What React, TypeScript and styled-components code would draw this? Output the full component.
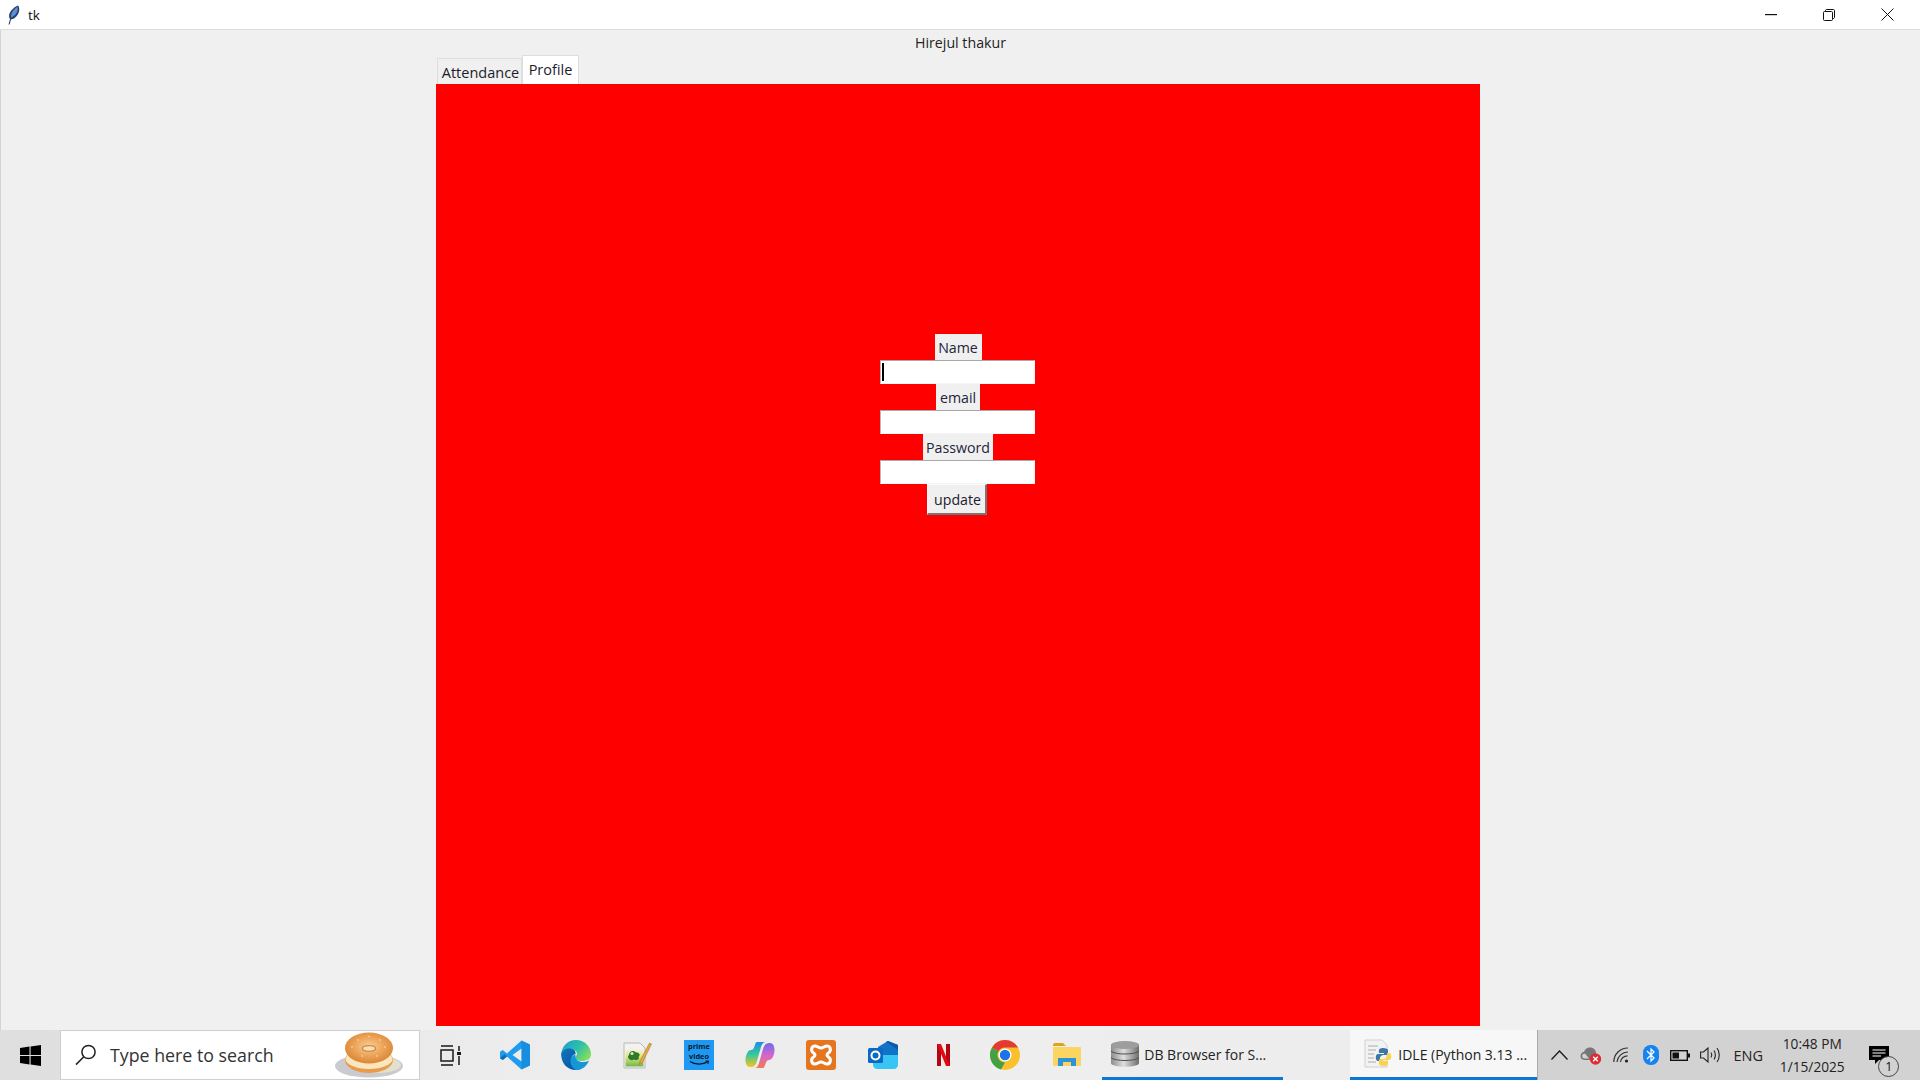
import React from "react";
import styled, { createGlobalStyle } from "styled-components";

const Global = createGlobalStyle`
  html, body { margin: 0; padding: 0; height: 100%; overflow: hidden; }
  #root { height: 100%; }
  * { box-sizing: border-box; }
`;

const Desktop = styled.div`
  width: 1920px;
  height: 1080px;
  display: flex;
  flex-direction: column;
  font-family: "Open Sans", "Noto Sans", "Liberation Sans", sans-serif;
  color: #1a1a1a;
  background: #f0f0f0;
`;

/* ---------- window chrome ---------- */
const TitleBar = styled.header`
  height: 30px;
  flex: none;
  display: flex;
  align-items: center;
  background: #fff;
  padding-left: 7px;
  border-bottom: 1px solid #dcdcdc;
`;
const WindowTitle = styled.span`
  font-size: 13.5px;
  margin-left: 8px;
  color: #111;
`;
const WindowControls = styled.div`
  margin-left: auto;
  padding-right: 3px;
  display: flex;
`;
const ControlButton = styled.div`
  width: 58.6px;
  height: 29px;
  display: flex;
  align-items: center;
  justify-content: center;
`;

/* ---------- app body ---------- */
const Body = styled.main`
  flex: 1;
  min-height: 0;
  display: flex;
  flex-direction: column;
  border-left: 1px solid #d4d4d4;
  padding-bottom: 4px;
`;
const Heading = styled.div`
  height: 25px;
  flex: none;
  display: flex;
  align-items: center;
  justify-content: center;
  font-size: 14.2px;
  color: #222;
`;
const Notebook = styled.section`
  flex: 1;
  min-height: 0;
  width: 1044px;
  margin-left: 435px;
  display: flex;
  flex-direction: column;
`;
const TabRow = styled.div`
  height: 29px;
  flex: none;
  display: flex;
  align-items: flex-end;
  padding-left: 1px;
`;
const Tab = styled.div<{ $active?: boolean }>`
  height: ${(p) => (p.$active ? "29px" : "26px")};
  padding: ${(p) => (p.$active ? "0 6px 2px" : "1px 0 0 2px")};
  width: ${(p) => (p.$active ? "57px" : "85px")};
  display: flex;
  align-items: center;
  justify-content: center;
  font-size: 14.5px;
  color: #1c1c2c;
  background: ${(p) => (p.$active ? "#fff" : "#f0f0f0")};
  border: 1px solid #dedede;
  border-bottom: none;
`;
const Panel = styled.div`
  flex: 1;
  min-height: 0;
  background: #ff0000;
  padding: 250px 2px 0 0;
  display: flex;
  flex-direction: column;
  align-items: center;
`;
const FieldLabel = styled.div<{ $width: number }>`
  width: ${(p) => p.$width}px;
  height: 26px;
  margin-left: 2px;
  display: flex;
  align-items: center;
  justify-content: center;
  background: #f0f0f0;
  font-size: 14.2px;
  color: #24243a;
`;
const Entry = styled.div`
  width: 155px;
  height: 24px;
  background: #fff;
  border-top: 1px solid #a8a8a8;
  border-left: 1px solid #b8b8b8;
  border-right: 1px solid #f4f4f4;
  border-bottom: 1px solid #f4f4f4;
  display: flex;
  align-items: center;
`;
const Caret = styled.div`
  width: 2px;
  height: 18px;
  margin-left: 1px;
  background: #000;
`;
const UpdateButton = styled.div`
  width: 60px;
  height: 31px;
  padding-left: 2px;
  display: flex;
  align-items: center;
  justify-content: center;
  background: #f0f0f0;
  font-size: 14.2px;
  color: #1c1c2c;
  border-top: 1px solid #fafafa;
  border-left: 1px solid #fafafa;
  border-right: 2px solid #777;
  border-bottom: 2px solid #777;
`;

/* ---------- taskbar ---------- */
const Taskbar = styled.footer`
  height: 50px;
  flex: none;
  display: flex;
  align-items: stretch;
  background: linear-gradient(90deg, #dedede 0%, #ececec 25%, #eeeeee 55%, #ebebeb 100%);
`;
const StartButton = styled.div`
  width: 60px;
  flex: none;
  display: flex;
  align-items: center;
  justify-content: center;
`;
const SearchBox = styled.div`
  width: 360px;
  flex: none;
  display: flex;
  align-items: center;
  background: #fff;
  border: 1px solid #cfcfcf;
  padding-left: 14px;
`;
const SearchText = styled.span`
  font-size: 17.8px;
  margin-left: 13px;
  color: #333;
`;
const BagelWrap = styled.div`
  margin-left: auto;
  margin-right: 15px;
  display: flex;
`;
const TaskViewSlot = styled.div`
  width: 64px;
  flex: none;
  display: flex;
  align-items: center;
  justify-content: center;
  padding-right: 4px;
`;
const IconSlot = styled.div`
  width: 61.33px;
  flex: none;
  display: flex;
  align-items: center;
  justify-content: center;
`;
const RunningApp = styled.div<{ $width: number; $active?: boolean; $gap: number; $pad: number }>`
  width: ${(p) => p.$width}px;
  margin-left: ${(p) => p.$gap}px;
  flex: none;
  display: flex;
  align-items: center;
  padding-left: ${(p) => p.$pad}px;
  font-size: 14px;
  color: #222;
  white-space: nowrap;
  background: ${(p) => (p.$active ? "#f7f7f7" : "transparent")};
  border-bottom: 3px solid #0a78d4;
`;
const RunningLabel = styled.span`
  margin-left: 4px;
  padding-top: 2px;
`;
const Tray = styled.div`
  flex: 1;
  margin-left: -3px;
  padding-left: 5px;
  display: flex;
  align-items: center;
  background: #d2d2d2;
  border-left: 1px solid #a9a9a9;
`;
const TraySlot = styled.div<{ $width: number }>`
  width: ${(p) => p.$width}px;
  flex: none;
  height: 100%;
  display: flex;
  align-items: center;
  justify-content: center;
`;
const TrayText = styled.span`
  font-size: 14.5px;
  color: #222;
`;
const Clock = styled.div`
  width: 82px;
  flex: none;
  text-align: center;
  font-size: 13.7px;
  line-height: 23px;
  color: #222;
  white-space: nowrap;
`;
const NotificationIcon = styled.div`
  position: relative;
  display: flex;
`;
const NotificationBadge = styled.div`
  position: absolute;
  right: -10px;
  bottom: -12px;
  width: 21px;
  height: 21px;
  border-radius: 50%;
  border: 1px solid #444;
  background: #d2d2d2;
  font-size: 12.5px;
  line-height: 19px;
  text-align: center;
  color: #111;
`;

/* ---------- icons ---------- */
const Feather = () => (
  <svg width="13" height="20" viewBox="0 0 13 20">
    <path d="M1.5 19.5 L3 14 C0.5 11 3 4 11 0.5 C13.5 3 12.5 10 7 13.5 L4 14.5 L2.6 19.5Z" fill="#27426f" />
    <path d="M4 12.5 C3.5 8.5 6.5 4 10.5 2 C11.5 5 9.5 10.5 4 12.5Z" fill="#5d8fd6" />
  </svg>
);
const WindowsLogo = () => (
  <svg width="21" height="21" viewBox="0 0 21 21" fill="#000">
    <path d="M0 3 L9.5 1.6 V10 H0Z M10.6 1.4 L21 0 V10 H10.6Z M0 11 H9.5 V19.4 L0 18Z M10.6 11 H21 V21 L10.6 19.6Z" />
  </svg>
);
const SearchGlass = () => (
  <svg width="22" height="22" viewBox="0 0 22 22" fill="none" stroke="#222" strokeWidth="1.5">
    <circle cx="13.5" cy="8" r="6.6" />
    <path d="M8.8 12.8 L1 20.6" />
  </svg>
);
const Bagel = () => (
  <svg width="70" height="46" viewBox="0 0 70 46">
    <defs>
      <radialGradient id="bagelTop" cx="50%" cy="45%" r="55%">
        <stop offset="0%" stopColor="#f6cf97" />
        <stop offset="55%" stopColor="#eda458" />
        <stop offset="100%" stopColor="#d98638" />
      </radialGradient>
    </defs>
    <ellipse cx="35" cy="34" rx="34" ry="11.5" fill="#c9cbd0" />
    <ellipse cx="42" cy="33" rx="25" ry="8" fill="#e4e0d0" />
    <ellipse cx="35" cy="28" rx="24" ry="13" fill="#e99b4d" />
    <ellipse cx="35" cy="27" rx="23.5" ry="10" fill="#fbe7bb" />
    <ellipse cx="35" cy="16" rx="24" ry="15.5" fill="url(#bagelTop)" />
    <ellipse cx="35" cy="16.5" rx="6.5" ry="2.8" fill="#f7e0b4" stroke="#cf8a4a" strokeWidth="1.3" />
    <g fill="#fff1d6">
      <circle cx="24" cy="8" r=".7" /><circle cx="35" cy="4.5" r=".7" /><circle cx="46" cy="8" r=".7" />
      <circle cx="18" cy="15" r=".7" /><circle cx="51" cy="15" r=".7" /><circle cx="28" cy="24" r=".7" />
      <circle cx="43" cy="24" r=".7" />
    </g>
  </svg>
);
const TaskView = () => (
  <svg width="21" height="21" viewBox="0 0 21 21" fill="none" stroke="#1a1a1a" strokeWidth="1.5">
    <path d="M1 1 H13 M1 20 H13" />
    <rect x="1" y="5" width="12" height="11" />
    <path d="M19 1 V6 M19 11 V20" />
    <rect x="17" y="7" width="4" height="3" fill="#1a1a1a" stroke="none" />
  </svg>
);
const VSCode = () => (
  <svg width="30" height="30" viewBox="0 0 30 30">
    <path d="M21.5 0.5 L30 4.6 V25.4 L21.5 29.5 L7 16.5 L2.8 20 L0 18.2 V11.8 L2.8 10 L7 13.5Z M21.5 8.5 L12.5 15 L21.5 21.5Z" fill="#1f9cf0" fillRule="evenodd" />
    <path d="M21.5 0.5 L30 4.6 V25.4 L21.5 29.5Z" fill="#0f7fcb" opacity=".45" />
    <path d="M0 18.2 L2.8 20 L7 16.5 L4.5 14.3Z" fill="#0f6fb5" />
  </svg>
);
const Edge = () => (
  <svg width="30" height="30" viewBox="0 0 30 30">
    <defs>
      <linearGradient id="edgeA" x1="0" y1="0" x2="1" y2="0.6">
        <stop offset="0%" stopColor="#1a9ad6" />
        <stop offset="60%" stopColor="#2fc1a8" />
        <stop offset="100%" stopColor="#7fdc60" />
      </linearGradient>
      <linearGradient id="edgeB" x1="0" y1="0" x2="1" y2="1">
        <stop offset="0%" stopColor="#0e76bd" />
        <stop offset="100%" stopColor="#0a4f9e" />
      </linearGradient>
    </defs>
    <path d="M15 0 C24 0 30 7 30 14 C30 19 26 21 21 21 C17 21 14.5 19.5 14.5 17.5 C14.5 16 15.5 15.5 16 14.5 C16.5 11 13 9 9.5 9.5 C5 10 2 13 0.2 16 C0 7 6 0 15 0Z" fill="url(#edgeA)" />
    <path d="M0.2 14 C1.5 9.5 6 8 9.5 8.5 C13 9 15 11 14.5 14 C11 15 9.5 18 10.5 22 C11.5 26 15 29 19 29.5 C17.5 30 16 30 15 30 C6 30 0 23 0.2 14Z" fill="url(#edgeB)" />
    <path d="M14.5 17 C15 20.5 19 22.5 23 22 C25 21.8 27 21 28 20.4 C26 26 21 30 15 30 C11.5 28.5 9 24 9.5 20 C10 17 12 15 14.5 14.5Z" fill="#1695d8" />
  </svg>
);
const NotepadPP = () => (
  <svg width="29" height="28" viewBox="0 0 29 28">
    <defs>
      <linearGradient id="nppBg" x1="0" y1="0" x2="0" y2="1">
        <stop offset="0%" stopColor="#f3f3e6" />
        <stop offset="45%" stopColor="#dfe27a" />
        <stop offset="100%" stopColor="#6fb84a" />
      </linearGradient>
    </defs>
    <path d="M1 2 H17 L22 7 V27 H1Z" fill="#f2f2ee" stroke="#b9b9b9" />
    <rect x="2.5" y="8" width="18" height="17.5" fill="url(#nppBg)" />
    <path d="M6 14 C6 9.5 11 9 13 11.5 C16 11 18 14 15.5 16 C17 18 14 20 11 18.5 C9 20 6 19 5.5 17 C4.5 16 5 15 6 14Z" fill="#2f7a2a" />
    <circle cx="9" cy="12.5" r="1.6" fill="#d9e8c8" />
    <path d="M17 20 L26.5 2 L28.5 3 L19.5 21.5 L16.5 23.5Z" fill="#eaa93a" stroke="#8a6a2a" strokeWidth=".5" />
  </svg>
);
const Prime = () => (
  <svg width="30" height="30" viewBox="0 0 30 30">
    <rect width="30" height="30" fill="#1f98f4" />
    <text x="15" y="9" textAnchor="middle" fontSize="7.4" fontWeight="700" fontFamily="Open Sans, sans-serif" fill="#0c1a26">prime</text>
    <text x="15" y="19" textAnchor="middle" fontSize="7.4" fontWeight="700" fontFamily="Open Sans, sans-serif" fill="#0c1a26">video</text>
    <path d="M6 21.5 C11 25 19 25 24 21.5" fill="none" stroke="#0c1a26" strokeWidth="1.4" />
    <path d="M21.5 21 L24.6 21 L23.8 24" fill="none" stroke="#0c1a26" strokeWidth="1" />
  </svg>
);
const copilotBlade = "M12 1 H21 C18 1 17 3 16 6 L12 20 C11 24 9 26 6 26 H5 C2 26 0.5 23 0.5 19 C0.5 14 3 9 6 9 C8 9 9 7 10 4 C10.5 2 11 1 12 1Z";
const Copilot = () => (
  <svg width="30" height="28" viewBox="0 0 30 28">
    <defs>
      <linearGradient id="copLeft" x1="0" y1="0" x2="0" y2="1">
        <stop offset="0%" stopColor="#1b8fe6" />
        <stop offset="50%" stopColor="#38c79c" />
        <stop offset="100%" stopColor="#f6c51e" />
      </linearGradient>
      <linearGradient id="copRight" x1="0" y1="0" x2="0" y2="1">
        <stop offset="0%" stopColor="#ef7d4e" />
        <stop offset="50%" stopColor="#d864cf" />
        <stop offset="100%" stopColor="#6a6fe8" />
      </linearGradient>
    </defs>
    <path d={copilotBlade} fill="url(#copLeft)" />
    <path d={copilotBlade} fill="url(#copRight)" transform="rotate(180 15 14)" />
  </svg>
);
const Xampp = () => (
  <svg width="30" height="30" viewBox="0 0 30 30">
    <rect width="30" height="30" rx="3" fill="#e5761f" />
    <path
      d="M9 6 C11.5 6 12.5 8 15 8 C17.5 8 18.5 6 21 6 C24.5 6 25.5 10.5 23 12.5 C22 13.5 21 14 21 15 C21 16 22 16.5 23 17.5 C25.5 19.5 24.5 24 21 24 C18.5 24 17.5 22 15 22 C12.5 22 11.5 24 9 24 C5.5 24 4.5 19.5 7 17.5 C8 16.5 9 16 9 15 C9 14 8 13.5 7 12.5 C4.5 10.5 5.5 6 9 6Z"
      fill="#e5761f"
      stroke="#fff"
      strokeWidth="3"
    />
  </svg>
);
const Outlook = () => (
  <svg width="30" height="28" viewBox="0 0 30 28">
    <path d="M10 6 L20 0 L30 4 V14 H10Z" fill="#1173c7" />
    <path d="M18 0.8 L20 0 L30 4 V9 Z" fill="#0a5ba8" />
    <path d="M5 14 H30 V24 C30 26 28 28 26 28 H9 C7 28 5 26 5 24Z" fill="#37c6f4" />
    <rect x="0" y="7" width="15" height="15" rx="1.5" fill="#0b69c4" />
    <circle cx="7.5" cy="14.5" r="4" fill="none" stroke="#fff" strokeWidth="2" />
  </svg>
);
const Netflix = () => (
  <svg width="13" height="22" viewBox="0 0 13 22">
    <path d="M0 0 H4 V22 L0 22.4Z" fill="#b20710" />
    <path d="M9 0 H13 V22.4 L9 22Z" fill="#b20710" />
    <path d="M0 0 H4 L13 22.4 L9 22Z" fill="#e50914" />
  </svg>
);
const Chrome = () => (
  <svg width="30" height="30" viewBox="0 0 30 30">
    <circle cx="15" cy="15" r="15" fill="#fbc02d" />
    <path d="M15 0 A15 15 0 0 1 28 7.5 H15 A7.5 7.5 0 0 0 8.5 11.2 L2 7.5 A15 15 0 0 1 15 0Z" fill="#e53935" />
    <path d="M2 7.5 L8.5 11.2 A7.5 7.5 0 0 0 15 22.5 L11 29.5 A15 15 0 0 1 2 7.5Z" fill="#43a047" />
    <circle cx="15" cy="15" r="6.5" fill="#fff" />
    <circle cx="15" cy="15" r="5.2" fill="#1a73e8" />
  </svg>
);
const Explorer = () => (
  <svg width="28" height="24" viewBox="0 0 28 24">
    <path d="M0 2 C0 1 1 0 2 0 H10 L13 3 H0Z" fill="#dfa31a" />
    <path d="M0 4 H27 C27.5 4 28 4.5 28 5 V22 C28 23 27 23 26.5 23 H1.5 C1 23 0 23 0 22Z" fill="#fbd462" />
    <path d="M5 23 V15 H23 V23 H18 V19 H10 V23Z" fill="#2f93d8" />
  </svg>
);
const Database = () => (
  <svg width="30" height="28" viewBox="0 0 30 28">
    <defs>
      <linearGradient id="dbA" x1="0" y1="0" x2="1" y2="0">
        <stop offset="0%" stopColor="#8c8c8c" />
        <stop offset="45%" stopColor="#dedede" />
        <stop offset="100%" stopColor="#6d6d6d" />
      </linearGradient>
    </defs>
    <path d="M1 5 C1 1 29 1 29 5 V23 C29 28 1 28 1 23Z" fill="url(#dbA)" />
    <ellipse cx="15" cy="5" rx="14" ry="4" fill="#9d9d9d" />
    <path d="M1 11 C4 15 26 15 29 11 M1 17.5 C4 21.5 26 21.5 29 17.5" fill="none" stroke="#4f4f4f" strokeWidth="1" />
  </svg>
);
const IdleIcon = () => (
  <svg width="30" height="30" viewBox="0 0 30 30">
    <path d="M1 1 H18 L23 6 V28 H1Z" fill="#f2f2f2" stroke="#d0d0d0" />
    <path d="M4 7 H14 M4 11 H12 M4 15 H10 M4 19 H10 M4 23 H12" stroke="#c4c4c4" strokeWidth="1.3" />
    <path d="M19 9 C14 9 15 12 15 14 H20 V15 H14 C11 15 11 22 14 22 H16 V19 C16 17 18 16 19.5 16 H23 C24 16 24 15 24 14 V11 C24 10 22 9 19 9Z" fill="#3b77a8" />
    <path d="M20 27 C25 27 24 24 24 22 H19 V21 H25 C28 21 28 14 25 14 H23 V17 C23 19 21 20 19.5 20 H16 C15 20 15 21 15 22 V25 C15 26 17 27 20 27Z" fill="#fbd34a" />
  </svg>
);
const Chevron = () => (
  <svg width="17" height="10" viewBox="0 0 17 10" fill="none" stroke="#1a1a1a" strokeWidth="1.3">
    <path d="M0.5 9.5 L8.5 1 L16.5 9.5" />
  </svg>
);
const CloudError = () => (
  <svg width="22" height="20" viewBox="0 0 22 20">
    <path d="M5 15 C1 15 0 12 0.8 9.5 C1.5 7.5 3 7 4 7 C5 3.5 8 2 11 2.6 C14 3 16 5.5 16 8 L14 15Z" fill="#777" />
    <path d="M5 13.5 C2.5 13.5 1.8 11.5 2.3 10 C2.8 8.8 4 8.5 5.3 8.7 L9 13.5Z" fill="#d2d2d2" />
    <circle cx="15.5" cy="14" r="5.7" fill="#e02a35" />
    <path d="M13.2 11.7 L17.8 16.3 M17.8 11.7 L13.2 16.3" stroke="#fff" strokeWidth="1.4" />
  </svg>
);
const Wifi = () => (
  <svg width="17" height="16" viewBox="0 0 17 16" fill="none" stroke="#333" strokeWidth="1.2">
    <path d="M0.8 15 A14 14 0 0 1 15 1" />
    <path d="M4 15 A11 11 0 0 1 15 5" />
    <path d="M7.5 15 A7 7 0 0 1 14.5 8.8" />
    <circle cx="13.5" cy="14" r="1.6" fill="#222" stroke="none" />
  </svg>
);
const Bluetooth = () => (
  <svg width="16" height="20" viewBox="0 0 16 20">
    <rect width="16" height="20" rx="7.5" fill="#1684f0" />
    <path d="M4 6 L11 13 L8 16 V4 L11 7 L4 14" fill="none" stroke="#fff" strokeWidth="1.2" />
  </svg>
);
const Battery = () => (
  <svg width="20" height="11" viewBox="0 0 20 11">
    <rect x=".7" y=".7" width="16.6" height="9.6" fill="none" stroke="#111" strokeWidth="1.4" />
    <rect x="2.5" y="2.5" width="6.5" height="6" fill="#111" />
    <rect x="18" y="3.5" width="2" height="4" fill="#111" />
  </svg>
);
const Speaker = () => (
  <svg width="21" height="16" viewBox="0 0 21 16" fill="none" stroke="#222" strokeWidth="1.1">
    <path d="M0.6 5 H3.5 L8 1 V15 L3.5 11 H0.6Z" />
    <path d="M11 5.5 C12 7 12 9 11 10.5" />
    <path d="M14 3.5 C15.8 6 15.8 10 14 12.5" />
    <path d="M17 1 C20 5 20 11 17 15" />
  </svg>
);
const Chat = () => (
  <svg width="20" height="19" viewBox="0 0 20 19">
    <path d="M0 0 H20 V14 H10 L6 18 V14 H0Z" fill="#000" />
    <path d="M3.5 4 H16.5 M3.5 7 H16.5 M3.5 10 H12" stroke="#fff" strokeWidth="1" />
  </svg>
);

const pinned = [VSCode, Edge, NotepadPP, Prime, Copilot, Xampp, Outlook, Netflix, Chrome, Explorer];

const LabelledField = ({ label, width, focused }: { label: string; width: number; focused?: boolean }) => (
  <>
    <FieldLabel $width={width}>{label}</FieldLabel>
    <Entry>{focused && <Caret />}</Entry>
  </>
);

export default function App() {
  return (
    <Desktop>
      <Global />
      <TitleBar>
        <Feather />
        <WindowTitle>tk</WindowTitle>
        <WindowControls>
          <ControlButton>
            <svg width="12" height="2" viewBox="0 0 12 2"><rect width="12" height="1.2" fill="#111" /></svg>
          </ControlButton>
          <ControlButton>
            <svg width="12" height="12" viewBox="0 0 12 12" fill="none" stroke="#111" strokeWidth="1">
              <rect x=".5" y="2.5" width="9" height="9" rx="1" />
              <path d="M2.5 2.5 V1.5 C2.5 1 3 .5 3.5 .5 H10.5 C11 .5 11.5 1 11.5 1.5 V8.5 C11.5 9 11 9.5 10.5 9.5 H9.5" />
            </svg>
          </ControlButton>
          <ControlButton>
            <svg width="13" height="13" viewBox="0 0 13 13" stroke="#111" strokeWidth="1">
              <path d="M.5 .5 L12.5 12.5 M12.5 .5 L.5 12.5" />
            </svg>
          </ControlButton>
        </WindowControls>
      </TitleBar>

      <Body>
        <Heading>Hirejul thakur</Heading>
        <Notebook>
          <TabRow>
            <Tab>Attendance</Tab>
            <Tab $active>Profile</Tab>
          </TabRow>
          <Panel>
            <LabelledField label="Name" width={47} focused />
            <LabelledField label="email" width={44} />
            <LabelledField label="Password" width={70} />
            <UpdateButton>update</UpdateButton>
          </Panel>
        </Notebook>
      </Body>

      <Taskbar>
        <StartButton><WindowsLogo /></StartButton>
        <SearchBox>
          <SearchGlass />
          <SearchText>Type here to search</SearchText>
          <BagelWrap><Bagel /></BagelWrap>
        </SearchBox>
        <TaskViewSlot><TaskView /></TaskViewSlot>
        {pinned.map((Icon, i) => (
          <IconSlot key={i}><Icon /></IconSlot>
        ))}
        <RunningApp $width={181} $gap={5} $pad={8}>
          <Database />
          <RunningLabel>DB Browser for S...</RunningLabel>
        </RunningApp>
        <RunningApp $width={190} $gap={67} $pad={14} $active>
          <IdleIcon />
          <RunningLabel>IDLE (Python 3.13 ...</RunningLabel>
        </RunningApp>
        <Tray>
          <TraySlot $width={32}><Chevron /></TraySlot>
          <TraySlot $width={31}><CloudError /></TraySlot>
          <TraySlot $width={30}><Wifi /></TraySlot>
          <TraySlot $width={29}><Bluetooth /></TraySlot>
          <TraySlot $width={30}><Battery /></TraySlot>
          <TraySlot $width={30}><Speaker /></TraySlot>
          <TraySlot $width={46}><TrayText>ENG</TrayText></TraySlot>
          <Clock>10:48 PM<br />1/15/2025</Clock>
          <TraySlot $width={52}>
            <NotificationIcon>
              <Chat />
              <NotificationBadge>1</NotificationBadge>
            </NotificationIcon>
          </TraySlot>
        </Tray>
      </Taskbar>
    </Desktop>
  );
}
